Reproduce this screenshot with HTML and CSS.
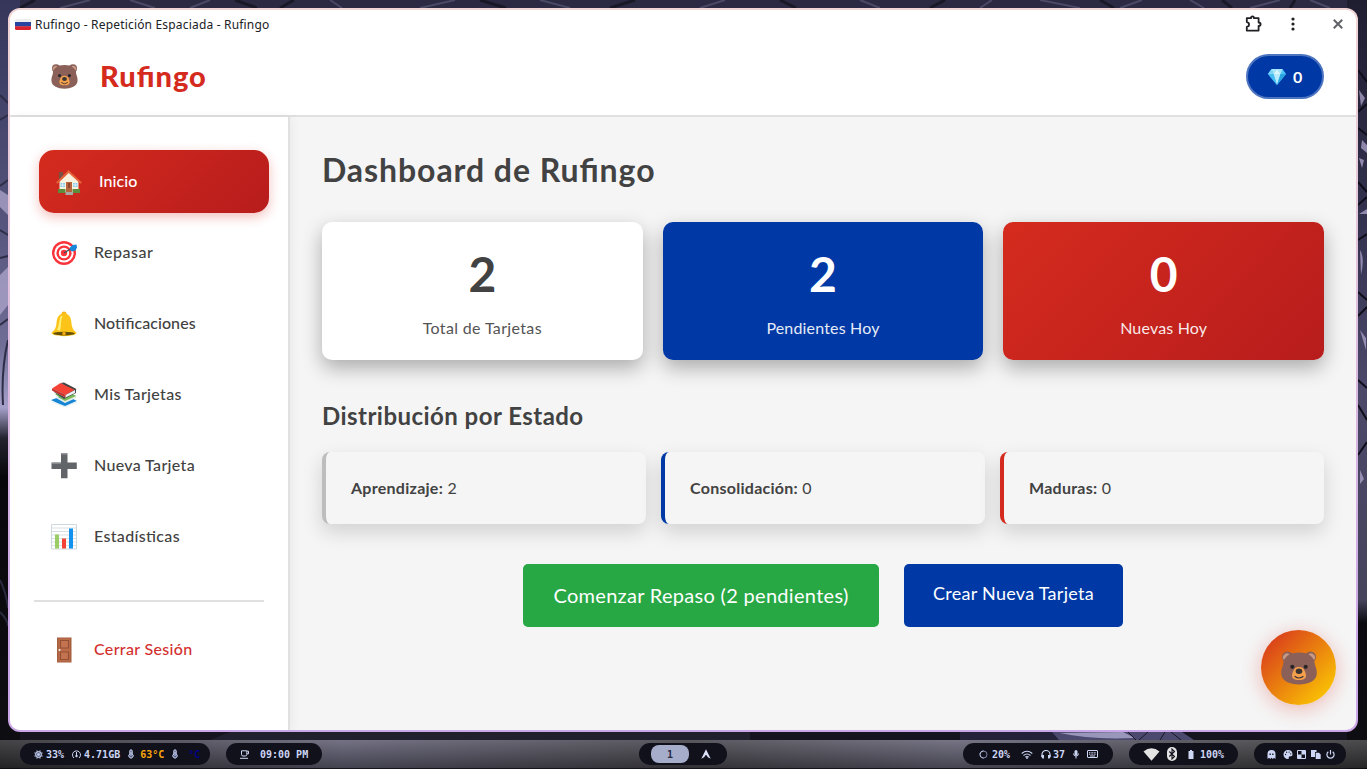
FILE: index.html
```
<!DOCTYPE html>
<html lang="es">
<head>
<meta charset="utf-8">
<title>Rufingo - Repetición Espaciada</title>
<link rel="stylesheet" href="styles.css">
</head>
<body>
<svg width="0" height="0" class="defs">
  <symbol id="bear" viewBox="0 0 36 34">
    <circle cx="6.500" cy="6" r="5.500" fill="#8b6059"/><circle cx="29.500" cy="6" r="5.500" fill="#8b6059"/>
    <path d="M3 9a3.500 3.500 0 0 1 6-5z" fill="#c79a85"/><path d="M33 9a3.500 3.500 0 0 0-6-5z" fill="#c79a85"/>
    <path d="M18 1.500C8 1.500 2.500 6 2 14 .5 18 0 20 .3 23.500 1 30 9 33.500 18 33.500S35 30 35.700 23.500C36 20 35.500 18 34 14 33.500 6 28 1.500 18 1.500Z" fill="#8b6059"/>
    <path d="M18 16c-4 0-5 2-6.500 6-1.500 4.500.5 7 6.500 7s8-2.500 6.500-7c-1.500-4-2.500-6-6.500-6z" fill="#f5a04c"/>
    <ellipse cx="18" cy="20.300" rx="3.300" ry="2.700" fill="#3a3433"/>
    <circle cx="11.300" cy="15.800" r="2.100" fill="#292527"/><circle cx="24.700" cy="15.800" r="2.100" fill="#292527"/>
    <path d="M14 25.500q4 3 8 0" fill="none" stroke="#3a3433" stroke-width="1.200" stroke-linecap="round"/>
  </symbol>
</svg>
<svg class="wallpaper" viewBox="0 0 1367 769" preserveAspectRatio="none">
  <defs>
    <linearGradient id="wl" x1="0" y1="0" x2="0" y2="1"><stop offset="0" stop-color="#35365a"/><stop offset=".3" stop-color="#56567e"/><stop offset=".45" stop-color="#706e96"/><stop offset=".53" stop-color="#a4a0ca"/><stop offset=".57" stop-color="#24232f"/><stop offset=".62" stop-color="#08080c"/><stop offset="1" stop-color="#0e0e13"/></linearGradient>
    <linearGradient id="wr" x1="0" y1="0" x2="0" y2="1"><stop offset="0" stop-color="#1f1e31"/><stop offset=".3" stop-color="#343350"/><stop offset=".5" stop-color="#4b4869"/><stop offset=".78" stop-color="#45445c"/><stop offset=".81" stop-color="#0a0a10"/><stop offset="1" stop-color="#0e0e13"/></linearGradient>
  </defs>
  <rect width="1367" height="769" fill="#15141f"/>
  <rect width="1367" height="30" fill="#2b2a42"/>
  <rect width="20" height="769" fill="url(#wl)"/>
  <rect x="1347" width="20" height="769" fill="url(#wr)"/>
  <g fill="none" stroke="#4a4966" stroke-width="2"><path d="M60 8L90 0M130 0l25 8M190 8l20-8M330 0l12 8M420 8l35-8M540 0l30 8M700 8l25-8M860 0l20 8M980 8l12-8M1040 0l40 8M1120 8l22-8M1190 0l14 8M1250 8l30-8M1310 0l20 8"/></g>
  <g fill="none" stroke="#191826" stroke-width="3"><path d="M20 8L35 0M235 0l22 8M280 8l14-8M480 0l26 8M610 8l25-8M780 0l16 8M930 8l15-8M1100 0l14 8M1222 0l10 8M1290 8l5-8"/></g>
  <g fill="none" stroke="#2e2d48" stroke-width="2"><path d="M0 95l8 8M0 120l8-5M0 186l8-6M0 230l8 5M0 258l8-2M0 325l8-6M3 405q-2-35 5-65"/></g>
  <g fill="#b0a7cc"><path d="M1359 90l6 8-4 8zM1362 140l5 5v8l-6-5zM1359 158l5 2-2 8zM1359 214l8-5v5zM1360 250q5 8 1 25zM1360 330l6 8v12zM1360 470l4 9-4 5zM0 190l8 5v20l-8-8zM0 275l8-8v38l-8 10z" opacity=".75"/></g>
  <g fill="none" stroke="#0e0d19" stroke-width="2"><path d="M1358 70l9 12M1358 112l9-8M1358 128l9 7M1358 182l9 10M1358 205l9-8M1358 240l9-6M1358 292l9 8M1358 316l9-9M1358 380l9 8M1358 405l9 15M1358 455l9-13"/></g>
  <path d="M0 580q6 12 8 28M0 612q8 8 8 14" fill="none" stroke="#29293f" stroke-width="2"/>
  <path d="M230 732h520v8H210z" fill="#20202f"/>
  <path d="M960 732h100v8H960z" fill="#23223a"/>
  <path d="M1052 732h130l12 8h-135z" fill="#4b4a6e"/><path d="M1060 733q30 7 75 5l-12-6z" fill="#9897ba"/>
  <g stroke="#171622"><path d="M1128 732l8 8M1148 732l-9 8M1165 732l-5 8M1171 732l10 8"/></g>
</svg>

<div class="desktop">
<div class="window">
 <div class="window-body">
  <div class="titlebar">
    <svg class="flag" viewBox="0 0 16 11"><rect width="16" height="11" rx="1.500" fill="#eee"/><path d="M0 3h16v4.500H0z" fill="#2745a0"/><path d="M0 7.300h16V9.500a1.500 1.500 0 0 1-1.500 1.500h-13A1.500 1.500 0 0 1 0 9.500z" fill="#d8232f"/></svg>
    <span class="window-title">Rufingo - Repetición Espaciada - Rufingo</span>
    <svg class="tb-puzzle" viewBox="0 0 18 18"><path d="M1.800 3.200H6C6 .8 9 .8 9 3.200h4.600v4.300c2.700 0 2.700 3.300 0 3.300v4.800H1.800v-3.800c3-.5 3-4.200 0-4.700z" fill="none" stroke="#202124" stroke-width="1.800" stroke-linejoin="round"/></svg>
    <svg class="tb-dots" viewBox="0 0 4 14"><g fill="#202124"><circle cx="2" cy="2" r="1.600"/><circle cx="2" cy="7" r="1.600"/><circle cx="2" cy="12" r="1.600"/></g></svg>
    <svg class="tb-close" viewBox="0 0 10 10"><path d="M.8.8l8.400 8.400M9.200.8L.8 9.200" stroke="#5f6368" stroke-width="2"/></svg>
  </div>
  <header class="header">
    <svg class="brand-bear"><use href="#bear"/></svg>
    <span class="brand">Rufingo</span>
    <div class="gems">
      <svg class="gem" viewBox="0 0 18 16"><path d="M3.500 0h11L18 5 9 16 0 5z" fill="#4fc3f7"/><path d="M3.500 0L5.500 5 9 0 12.500 5l2-5z" fill="#a6e6fb"/><path d="M3.500 0L0 5h5.500z" fill="#81d4fa"/><path d="M5.500 5h7L9 0z" fill="#d9f5fe"/><path d="M5.500 5h7L9 16z" fill="#b8ecfc"/><path d="M0 5h5.500L9 16z" fill="#45bdf2"/><path d="M12.500 5H18L9 16z" fill="#2ba5df"/></svg>
      <span>0</span>
    </div>
  </header>
  <div class="layout">
    <nav class="sidebar">
      <a class="nav-item active"><svg class="nav-icon" viewBox="0 0 26 26"><path d="M3 3h4v8H3z" fill="#795044"/><path d="M3.500 12L13 3l9.500 9v11h-19z" fill="#f8f1de"/><path d="M0 13.500L12.500 1 26 13.500l-1.500 1.300L12.700 4 1.500 14.800z" fill="#e4633b"/><path d="M10 13h6v10h-6z" fill="#b8643c"/><path d="M12 14h2v5h-2z" fill="#8e452e"/><path d="M4.500 14h4.500v4H4.500zM17 14h4.500v4H17z" fill="#8ecbe8"/><path d="M4.500 16h4.500M6.700 14v4M17 16h4.500M19.200 14v4" stroke="#fff" stroke-width=".6"/><path d="M2 20h7.500v4H2zM16.500 20H24v4h-7.500z" fill="#5d8c3d"/><path d="M9.500 23h7.500v3H9.500z" fill="#aaa6a4"/></svg><span class="fit-0">Inicio</span></a>
      <a class="nav-item"><svg class="nav-icon" viewBox="0 1 26 26"><circle cx="13" cy="14" r="12" fill="#f9343a"/><circle cx="13" cy="14" r="9.600" fill="#fff"/><circle cx="13" cy="14" r="7.600" fill="#f9343a"/><circle cx="13" cy="14" r="5.200" fill="#fff"/><circle cx="13" cy="14" r="3.200" fill="#f9343a"/><path d="M13 14l8-5" stroke="#37515f" stroke-width="1.300"/><path d="M19 11V8.500L21.500 6l4-.5.500 3-1.500 3-3.500 1z" fill="#1686d8"/></svg><span class="fit-wide">Repasar</span></a>
      <a class="nav-item"><svg class="nav-icon" viewBox="0 0 26 26"><path d="M10.500 3a2.500 2.500 0 0 1 5 0v2h-5z" fill="#f7b515"/><path d="M13 2.500C7.500 2.500 5.800 7 5.500 12 5.200 17 3.500 19 .8 21.500c-1.500 2 5.200 3.700 12.200 3.700s13.700-1.700 12.200-3.700C22.500 19 20.800 17 20.500 12 20.200 7 18.500 2.500 13 2.500z" fill="#fcc419"/><path d="M10 5C8 8 8.500 14 6 19l3 .8C10.500 15 9.500 9 11.500 5z" fill="#fff07a"/><ellipse cx="13" cy="22.600" rx="10.800" ry="1.800" fill="#65500b"/><circle cx="13" cy="22.600" r="1.800" fill="#f0aa10"/></svg><span class="fit-0">Notificaciones</span></a>
      <a class="nav-item"><svg class="nav-icon" viewBox="0 0 26 26"><path d="M0 18l14-5 12 6-12 6z" fill="#1685d5"/><path d="M1 19l13 5 11.500-5v1.500L14 25.500 1 20.500z" fill="#e5f1f5"/><path d="M4 12l10-4 11.500 6L14 20z" fill="#79b957"/><path d="M5 14l9 5 11-5v2l-11 5-9-5z" fill="#e7eee8"/><path d="M2 7l12-5 11 5.500V11L13 17 3 10z" fill="#46494b"/><path d="M1 6.500L9.500 1 24 7.500 14.500 13z" fill="#f44336"/><path d="M9.500 1L13 .5 25.500 7 24 8z" fill="#444"/><path d="M1 6.500L14.500 13 24 8v3l-9.500 4.500L2 9z" fill="#eceff1"/><path d="M1 6.500L14.500 13v2.500L1 8.500z" fill="#c92d28"/></svg><span>Mis Tarjetas</span></a>
      <a class="nav-item"><svg class="nav-icon" viewBox="0 0 26 26"><path d="M10 .3h6.500V9.500h9.300V16h-9.300v9.300H10V16H.5V9.500H10z" fill="#616469"/><path d="M10.500 1h5.500M1 10.200h9" stroke="#9a9da1"/></svg><span>Nueva Tarjeta</span></a>
      <a class="nav-item"><svg class="nav-icon" viewBox="0 0 26 26"><path d="M.5.5h25v24.500H.5z" fill="#fff" stroke="#cfd8dc"/><path d="M1 4h24M1 7.500h24M1 11h24M1 14.500h24M1 18h24M1 21.500h24" stroke="#cfd8dc" stroke-width=".8"/><path d="M4 10.500h4V24.500H4z" fill="#9ccc65"/><path d="M11 14.500h4v10h-4z" fill="#f44336"/><path d="M18 4.500h4v20h-4z" fill="#1292ee"/></svg><span>Estadísticas</span></a>
      <div class="divider"></div>
      <a class="nav-item logout"><svg class="nav-icon" viewBox="0 0 26 26"><path d="M6 .5h14.500v25H6z" fill="#a5603e"/><path d="M7.500 1.500h11.500v23H7.500z" fill="#bd6c49"/><path d="M9.500 3.500h8v7.500h-8zM9.500 15h8v7.500h-8z" fill="#c47350" stroke="#935035" stroke-width="1.200"/><circle cx="8.500" cy="13" r="1.100" fill="#eee"/></svg><span>Cerrar Sesión</span></a>
    </nav>
    <main class="content">
      <h1 class="title">Dashboard de Rufingo</h1>
      <section class="stats">
        <div class="stat"><div class="num">2</div><div class="label">Total de Tarjetas</div></div>
        <div class="stat blue"><div class="num">2</div><div class="label label-tight">Pendientes Hoy</div></div>
        <div class="stat red"><div class="num">0</div><div class="label label-tight">Nuevas Hoy</div></div>
      </section>
      <h2 class="subtitle">Distribución por Estado</h2>
      <section class="states">
        <div class="state"><b>Aprendizaje:</b> 2</div>
        <div class="state consolidation"><b>Consolidación:</b> 0</div>
        <div class="state mature"><b>Maduras:</b> 0</div>
      </section>
      <div class="actions">
        <a class="btn green">Comenzar Repaso (2 pendientes)</a>
        <a class="btn navy">Crear Nueva Tarjeta</a>
      </div>
    </main>
  </div>
  <div class="fab"><svg class="fab-bear"><use href="#bear"/></svg></div>
 </div>
</div>
<footer class="bar">
  <div class="pill p-sys">
    <svg class="i9" viewBox="0 0 9 9"><path d="M3 0v9M6 0v9M0 3h9M0 6h9" stroke="#9aa2c0" stroke-width=".8"/><circle cx="4.500" cy="4.500" r="3" fill="#666d8c" stroke="#cdd6f4"/><circle cx="4.500" cy="4.500" r="1.300" fill="#cdd6f4"/></svg><span class="t1">33%</span>
    <svg class="i9 g1" viewBox="0 0 9 9"><path d="M2 8a4 4 0 1 1 5 0M4.500 6V2" fill="none" stroke="#cdd6f4"/><circle cx="4.500" cy="6" r="1.200" fill="#cdd6f4"/></svg><span class="t2">4.71GB</span>
    <svg class="thermo th1" viewBox="0 0 6 10"><path d="M1.800 5V2a1.200 1.200 0 0 1 2.400 0v3a2.200 2.200 0 1 1-2.400 0z" fill="#555d80" stroke="#cdd6f4"/><path d="M3 3v4" stroke="#cdd6f4"/></svg><span class="warm">63°C</span>
    <svg class="thermo th2" viewBox="0 0 6 10"><path d="M1.800 5V2a1.200 1.200 0 0 1 2.400 0v3a2.200 2.200 0 1 1-2.400 0z" fill="#555d80" stroke="#cdd6f4"/><path d="M3 3v4" stroke="#cdd6f4"/></svg><span class="cold">°C</span>
  </div>
  <div class="pill p-clock"><svg class="i9" viewBox="0 0 9 9"><path d="M1.500.8h5.300v3.700a1.500 1.500 0 0 1-1.500 1.500H3a1.500 1.500 0 0 1-1.500-1.500zM7 1.200h1.500v2.600H7M0 8.300h8" fill="none" stroke="#cdd6f4"/></svg><span class="clock">09:00 PM</span></div>
  <div class="pill p-ws"><span class="ws">1</span><svg class="arch" viewBox="0 0 10 10"><path d="M5 .3L9.700 9.700 6.500 8C6.500 5.500 3.500 5.500 3.500 8L.3 9.700z" fill="#dce2fa"/></svg></div>
  <div class="pill p-ctl">
    <svg class="i9" viewBox="0 0 9 9"><circle cx="4.500" cy="4.500" r="3.500" fill="none" stroke="#7f89ab"/><path d="M4.500 1a3.500 3.500 0 0 0 0 7" fill="none" stroke="#cdd6f4" stroke-dasharray="2.500 .6"/></svg><span class="c1">20%</span>
    <svg class="wifi" viewBox="0 0 12 9"><path d="M.7 3.500q5.300-4.500 10.600 0M2.500 5.500q3.500-3 7 0M4.200 7.200q1.800-1.500 3.600 0" fill="none" stroke="#cdd6f4" stroke-width="1.100"/><circle cx="6" cy="8" r=".9" fill="#cdd6f4"/></svg>
    <svg class="head" viewBox="0 0 10 9"><path d="M1 7V4.500a4 4 0 0 1 8 0V7" fill="none" stroke="#cdd6f4" stroke-width="1.200"/><path d="M.5 5H3v3.500H1.500L.5 7zM7 5h2.500v2L8.500 8.500H7z" fill="#cdd6f4"/></svg><span class="c2">37</span>
    <svg class="mic" viewBox="0 0 6 9"><rect x="1.500" width="3" height="5.500" rx="1.500" fill="#cdd6f4"/><path d="M.5 3.500a2.500 2.500 0 0 0 5 0M3 6v2.500" fill="none" stroke="#cdd6f4"/></svg>
    <svg class="kbd" viewBox="0 0 11 8"><rect x=".5" y=".5" width="10" height="7" rx=".5" fill="none" stroke="#cdd6f4"/><path d="M2 2.700h7M2 4.200h7" stroke="#cdd6f4" stroke-dasharray="1 .6"/><path d="M3 6h5" stroke="#cdd6f4"/></svg>
  </div>
  <div class="pill p-net">
    <svg class="wifi-fill" viewBox="0 0 17 13"><path d="M.5 3.500q8-6.500 16 0L8.500 12.700z" fill="#e4e4e4"/></svg>
    <svg class="bt" viewBox="0 0 10 14"><rect width="10" height="14" rx="5" fill="#e4e4e4"/><path d="M2.300 4.500l5.200 5L5 12V2l2.500 2.500-5.200 5" fill="none" stroke="#11111b" stroke-width="1.100"/></svg>
    <svg class="bat" viewBox="0 0 6 9"><path d="M2 0h2v1h1.500v8h-5V1H2z" fill="#cdd6f4"/></svg><span class="b1">100%</span>
  </div>
  <div class="pill p-tray">
    <svg class="i9" viewBox="0 0 9 9"><path d="M.5 9V4a4 4 0 0 1 8 0v5L7 7.700 5.800 9 4.500 7.700 3.200 9 2 7.700z" fill="#cdd6f4"/><path d="M2.500 3.500h1.300V5H2.500zM5.200 3.500h1.300V5H5.200z" fill="#11111b"/></svg>
    <svg class="i10 pal" viewBox="0 0 10 10"><path d="M5 0a5 5 0 0 0 0 10c1.500 0 .5-2 1-2.500.6-1 4 .5 4-2.800A5 5 0 0 0 5 0z" fill="#cdd6f4"/><g fill="#11111b"><circle cx="2.300" cy="5" r=".7"/><circle cx="3.500" cy="2.500" r=".7"/><circle cx="6.200" cy="2.300" r=".7"/><circle cx="8" cy="4.300" r=".7"/></g></svg>
    <svg class="i9" viewBox="0 0 9 9"><path d="M.5.5h8v8h-8z" fill="none" stroke="#cdd6f4"/><path d="M4.500 1H8v3.500H4.500zM1 4.500h3.500V8H1z" fill="#cdd6f4"/></svg>
    <svg class="i10" viewBox="0 0 10 9"><path d="M0 0h5.500v2H4v5H0z" fill="#cdd6f4"/><path d="M4.700 2.700H8L9.700 4.500V9h-5z" fill="#cdd6f4"/></svg>
    <svg class="i9" viewBox="0 0 9 9"><path d="M2.300 1.700a3.600 3.600 0 1 0 4.400 0M4.500 0v4.500" fill="none" stroke="#cdd6f4" stroke-width="1.200"/></svg>
  </div>
</footer>
</div>
</body>
</html>
```

FILE: styles.css
```
* { box-sizing: border-box; }
body { margin: 0; height: 769px; overflow: hidden; background: #15141f; font-family: Lato, "Open Sans", sans-serif; font-feature-settings: "liga" 1; color: #424242; }
svg { display: block; flex: none; }
.defs { position: absolute; }
.wallpaper { position: absolute; left: 0; top: 0; width: 1367px; height: 769px; }
.desktop { position: relative; display: flex; flex-direction: column; height: 769px; padding-top: 8px; }
.window { position: relative; margin: 0 9px 0 8px; height: 724px; padding: 2px; border-radius: 12px; background: linear-gradient(180deg, #f2d5d5, #cba6e8 90%); flex: none; }
.window-body { height: 720px; background: #f5f5f5; border-radius: 10px; overflow: hidden; display: flex; flex-direction: column; }

.titlebar { height: 28px; background: #fff; display: flex; align-items: center; padding: 0 13px 0 5px; flex: none; }
.flag { width: 16px; height: 11px; margin-right: 4px; }
.window-title { font: 12px/16px "Noto Sans", sans-serif; letter-spacing: .18px; color: #202124; white-space: nowrap; padding-top: 2px; }
.tb-puzzle { width: 18px; height: 18px; margin-left: auto; margin-right: 28px; }
.tb-dots { width: 4px; height: 14px; margin-right: 38px; }
.tb-close { width: 10px; height: 10px; }

.header { height: 79px; flex: none; background: #fff; border-bottom: 2px solid #e0e0e0; display: flex; align-items: center; padding: 0 32px 0 41px; }
.brand-bear { width: 27px; height: 25px; margin-right: 22px; }
.brand { font-size: 29px; font-weight: 900; letter-spacing: 1px; color: #d52b1e; line-height: 40px; padding-bottom: 2px; }
.gems { margin-left: auto; width: 78px; height: 45px; border: 2px solid #4d74bf; border-radius: 23px; background: #0039a6; color: #fff; font-weight: 700; font-size: 16px; display: flex; align-items: center; padding-left: 20px; gap: 7px; }
.gem { width: 18px; height: 16px; }

.layout { display: flex; flex: 1; min-height: 0; }
.sidebar { width: 280px; background: #fff; border-right: 2px solid #e0e0e0; padding: 33px 24px; flex: none; box-shadow: 2px 0 10px rgba(0,0,0,.05); display: flex; flex-direction: column; gap: 8px; }
.nav-item { height: 63px; flex: none; display: flex; align-items: center; padding-left: 17px; gap: 17px; border-radius: 15px; font-size: 16px; font-weight: 500; letter-spacing: .34px; white-space: nowrap; }
.nav-item span { padding-bottom: 2px; }
.nav-item .fit-0 { letter-spacing: .07px; }
.nav-item .fit-wide { letter-spacing: .5px; }
.nav-icon { width: 26px; height: 26px; }
.active { color: #fff; margin: 0 -5px 0 5px; background: linear-gradient(135deg, #d52b1e, #b71c1c); box-shadow: 0 4px 12px rgba(213,43,30,.3); }
.divider { height: 2px; background: #e0e0e0; margin: 24px 0 8px; flex: none; }
.logout { color: #d32f2f; }

.content { flex: 1; padding: 33px 32px; }
.title { margin: 0; font-size: 32px; line-height: 40px; font-weight: 700; letter-spacing: .93px; white-space: nowrap; }
.stats { display: grid; grid-template-columns: repeat(3, 1fr); gap: 20px; margin-top: 32px; }
.stat { height: 138px; border-radius: 10px; background: #fff; text-align: center; padding-top: 20px; box-shadow: 0 8px 20px rgba(0,0,0,.3); }
.num { font-size: 48px; font-weight: 700; line-height: 64px; }
.label { font-size: 16px; line-height: 22px; margin-top: 11px; letter-spacing: .35px; opacity: .9; }
.label-tight { letter-spacing: .17px; }
.blue { background: #0039a6; color: #fff; }
.red { background: linear-gradient(135deg, #d52b1e, #b71c1c); color: #fff; }
.subtitle { margin: 40px 0 0; font-size: 24px; line-height: 32px; font-weight: 700; letter-spacing: .46px; }
.states { display: grid; grid-template-columns: repeat(3, 1fr); gap: 15px; margin-top: 20px; }
.state { height: 72px; border-left: 4px solid #bdbdbd; border-radius: 8px; background: #f5f5f5; box-shadow: 0 8px 20px rgba(0,0,0,.15); padding-left: 25px; font-size: 16px; line-height: 71px; letter-spacing: .27px; }
.consolidation { border-color: #0039a6; }
.mature { border-color: #d52b1e; }
.actions { display: flex; justify-content: center; gap: 25px; margin-top: 40px; }
.btn { height: 63px; border-radius: 5px; color: #fff; text-align: center; white-space: nowrap; }
.green { width: 356px; background: #28a745; font-size: 20px; line-height: 62px; letter-spacing: .3px; }
.navy { width: 219px; background: #0039a6; font-size: 18px; line-height: 59px; letter-spacing: .27px; }
.fab { position: absolute; left: 1253px; top: 622px; width: 75px; height: 75px; border-radius: 50%; background: linear-gradient(135deg, #d52b1e, #ffd700); box-shadow: 0 4px 20px rgba(213,43,30,.3); display: flex; align-items: center; justify-content: center; }
.fab-bear { width: 36px; height: 34px; }

.bar { margin-top: 8px; height: 28px; background: linear-gradient(180deg, rgba(255,255,255,.08), rgba(0,0,0,.35)), linear-gradient(90deg, #353437, #68667a 25%, #4c4a51 50%, #6b697b 70%, #5c5a67 80%, #48484b 93%, #3c3b3d); display: flex; align-items: center; font: bold 10px/12px "DejaVu Sans Mono", monospace; color: #cdd6f4; flex: none; white-space: nowrap; }
.pill { height: 22px; border-radius: 11px; background: #11111b; display: flex; align-items: center; flex: none; }
.pill span { padding-top: 1px; }
.p-sys { width: 190px; margin-left: 20px; padding-left: 14px; }
.p-clock { width: 96px; margin-left: 16px; padding-left: 14px; }
.p-ws { width: 88px; margin-left: 317px; padding-left: 12px; }
.p-ctl { width: 150px; margin-left: 236px; padding-left: 16px; }
.p-net { width: 109px; margin-left: 16px; padding-left: 14px; }
.p-tray { width: 92px; margin-left: 16px; padding-left: 13px; gap: 5px; }
.i9 { width: 9px; height: 9px; }
.i10 { width: 10px; height: 9px; }
.pal { margin-left: 2px; margin-right: -1px; }
.t1 { margin-left: 3px; }
.g1 { margin-left: 8px; }
.t2 { margin-left: 3px; }
.thermo { width: 6px; height: 10px; }
.th1 { margin-left: 8px; }
.warm { margin-left: 6px; color: #f9a60c; }
.th2 { margin-left: 8px; }
.cold { margin-left: 10px; color: #00008b; }
.clock { margin-left: 11px; }
.ws { width: 38px; height: 18px; border-radius: 8px; background: #a6adcb; color: #292b45; text-align: center; line-height: 18px; }
.arch { width: 10px; height: 10px; margin-left: 12px; }
.c1 { margin-left: 4px; }
.wifi { width: 12px; height: 9px; margin-left: 11px; }
.head { width: 10px; height: 9px; margin-left: 8px; }
.c2 { margin-left: 2px; }
.mic { width: 6px; height: 9px; margin-left: 8px; }
.kbd { width: 11px; height: 8px; margin-left: 8px; }
.wifi-fill { width: 17px; height: 13px; }
.bt { width: 10px; height: 14px; margin-left: 7px; }
.bat { width: 6px; height: 9px; margin-left: 11px; }
.b1 { margin-left: 6px; }
```
